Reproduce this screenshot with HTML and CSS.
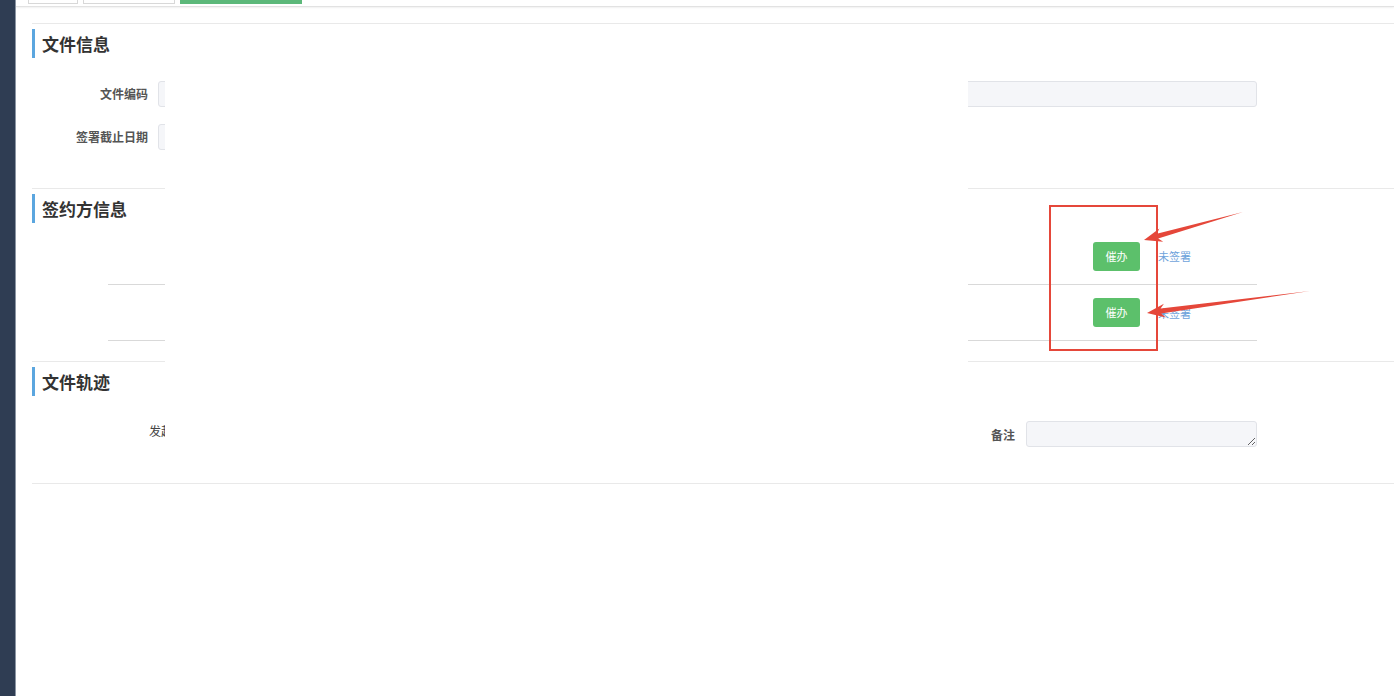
FILE: index.html
```html
<!DOCTYPE html>
<html lang="zh-CN">
<head>
	<meta charset="UTF-8">
	<title>文件详情</title>
	<link rel="stylesheet" href="styles.css">
</head>
<body>
	<div id="app">
		<div class="side"></div>
		<div class="main">
			<div class="tabs">
				<span class="tab t1"></span>
				<span class="tab t2"></span>
				<span class="tab t3 active"></span>
			</div>

			<!-- 文件信息 -->
			<div class="section s1">
				<h3 class="title">文件信息</h3>
				<div class="form-row">
					<label>文件编码</label>
					<input type="text" class="ipt">
				</div>
				<div class="form-row">
					<label>签署截止日期</label>
					<input type="text" class="ipt date">
				</div>
			</div>

			<!-- 签约方信息 -->
			<div class="section s2">
				<h3 class="title">签约方信息</h3>
				<div class="sign-table">
					<div class="sign-row">
						<span class="cell-main"></span>
						<span class="btn">催办</span>
						<span class="status">未签署</span>
					</div>
					<div class="sign-row">
						<span class="cell-main"></span>
						<span class="btn">催办</span>
						<span class="status">未签署</span>
					</div>
				</div>
			</div>

			<!-- 文件轨迹 -->
			<div class="section s3">
				<h3 class="title">文件轨迹</h3>
				<div class="track-row">
					<span class="track-name">发起人</span>
					<label>备注</label>
					<textarea class="remark"></textarea>
				</div>
			</div>
		</div>
	</div>

	<!-- 打码区域 -->
	<div class="mask"></div>

	<!-- 标注 -->
	<svg class="marks" width="1394" height="696" viewBox="0 0 1394 696">
		<rect x="1050" y="206" width="107" height="144" fill="none" stroke="#e5473a" stroke-width="2"/>
		<polygon fill="#e5473a" points="1243,212 1156.8,233.8 1159.4,228.4 1144,240 1163.2,241.8 1158.2,238.6"/>
		<polygon fill="#e5473a" points="1310,291 1160.6,308.6 1163.9,303.7 1147,313 1165.7,317.5 1161.2,313.6"/>
	</svg>
</body>
</html>
```

FILE: styles.css
```css
*{
	margin: 0;
	padding: 0;
	box-sizing: border-box;
}
body{
	font-family: "Noto Sans CJK SC", "Liberation Sans", sans-serif;
	font-size: 12px;
	color: #555;
	background: #fff;
	width: 1394px;
	height: 696px;
	overflow: hidden;
	position: relative;
}
#app{
	display: flex;
	height: 696px;
}
#app .side{
	width: 16px;
	background-color: #2f3d53;
	border-right: 1px solid #8c96a4;
}
#app .main{
	flex: 1;
}
.tabs{
	display: flex;
	gap: 5px;
	height: 7px;
	padding-left: 12px;
	border-bottom: 1px solid #e2e2e2;
	box-shadow: 0 1px 2px rgba(0,0,0,0.06);
}
.tabs .tab{
	height: 4px;
	border: 1px solid #d8d8d8;
	border-top: none;
	background: #fff;
}
.tabs .t1{ width: 50px; }
.tabs .t2{ width: 92px; }
.tabs .t3{
	width: 122px;
	background: #5cb87a;
	border-color: #5cb87a;
}
.section{
	margin-left: 16px;
	border-top: 1px solid #e9e9e9;
}
.section .title{
	margin-top: 5px;
	height: 29px;
	line-height: 29px;
	padding-left: 7px;
	border-left: 3px solid #5ba6df;
	font-size: 17px;
	font-weight: bold;
	color: #333;
}
.s1{
	margin-top: 16px;
	padding-bottom: 38px;
}
.form-row{
	display: flex;
	align-items: center;
	margin-top: 23px;
}
.form-row + .form-row{
	margin-top: 17px;
}
.form-row label{
	width: 116px;
	text-align: right;
	font-weight: bold;
	color: #555;
	margin-right: 10px;
	margin-top: -1px;
}
.form-row .ipt{
	width: 1099px;
	height: 26px;
	background: #f5f6f9;
	border: 1px solid #e1e3e8;
	border-radius: 3px;
}
.form-row .ipt.date{
	width: 260px;
}
.s2{
	padding-bottom: 20px;
}
.sign-table{
	margin: 5px 0 0 76px;
	width: 1149px;
}
.sign-row{
	display: flex;
	align-items: center;
	height: 56px;
	border-bottom: 1px solid #d9d9d9;
}
.sign-row:first-child{
	height: 57px;
}
.sign-row .cell-main{
	flex: 1;
}
.sign-row .btn{
	width: 47px;
	height: 29px;
	line-height: 29px;
	text-align: center;
	font-size: 11px;
	color: #fff;
	background: #5cc06b;
	border-radius: 3px;
	margin-right: 18px;
}
.sign-row .status{
	width: 99px;
	font-size: 11px;
	color: #6fa3db;
}
.s3{
	padding-bottom: 36px;
	border-bottom: 1px solid #e9e9e9;
}
.track-row{
	display: flex;
	align-items: center;
	margin-top: 25px;
	height: 26px;
}
.track-row .track-name{
	margin-left: 117px;
	margin-top: -8px;
	color: #444;
}
.track-row label{
	margin-left: auto;
	margin-right: 11px;
	font-weight: bold;
	color: #555;
}
.track-row .remark{
	width: 231px;
	height: 26px;
	background: #f5f6f9;
	border: 1px solid #e1e3e8;
	border-radius: 3px;
	margin-right: 137px;
}
.mask{
	position: absolute;
	left: 165px;
	top: 66px;
	width: 803px;
	height: 386px;
	background: #fff;
}
.marks{
	position: absolute;
	left: 0;
	top: 0;
	pointer-events: none;
}
```
